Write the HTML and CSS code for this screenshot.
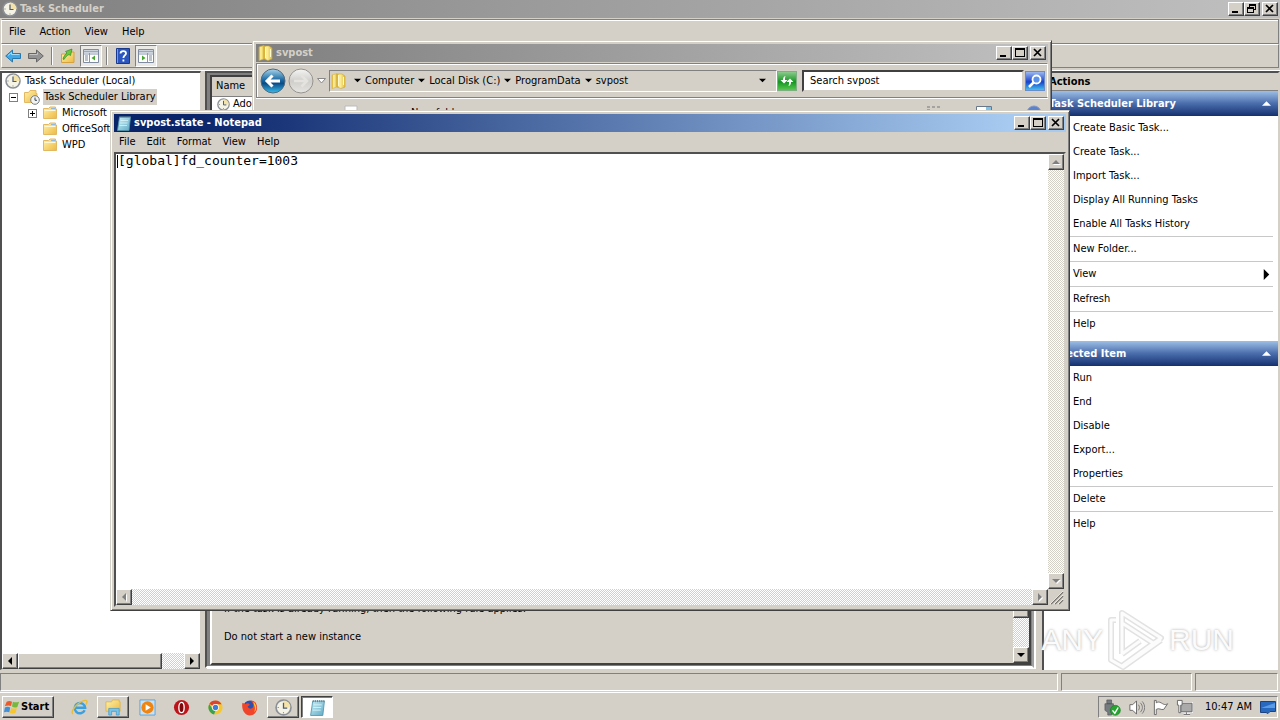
FILE: index.html
```html
<!DOCTYPE html>
<html lang="en">
<head>
<meta charset="utf-8">
<title>Task Scheduler</title>
<link rel="stylesheet" href="styles.css">
</head>
<body>
<svg class="defs" aria-hidden="true">
  <defs>
    <linearGradient id="gFolder" x1="0" y1="0" x2="1" y2="1"><stop offset="0" stop-color="#fff3ae"/><stop offset="1" stop-color="#edb93f"/></linearGradient>
    <linearGradient id="gOpen" x1="0" x2="1"><stop offset="0" stop-color="#d8ae28"/><stop offset=".35" stop-color="#fff3a0"/><stop offset="1" stop-color="#e0bb3e"/></linearGradient>
    <linearGradient id="gBlue" x1="0" y1="0" x2="0" y2="1"><stop offset="0" stop-color="#a9d4ea"/><stop offset=".45" stop-color="#1d6ba4"/><stop offset=".6" stop-color="#0b4b86"/><stop offset="1" stop-color="#35c0ee"/></linearGradient>
    <linearGradient id="gGrey" x1="0" y1="0" x2="0" y2="1"><stop offset="0" stop-color="#f5f5f3"/><stop offset=".5" stop-color="#cfcecb"/><stop offset="1" stop-color="#e6e5e2"/></linearGradient>
    <linearGradient id="gPad" x1="0" y1="0" x2="1" y2="1"><stop offset="0" stop-color="#c9eff7"/><stop offset="1" stop-color="#5fabc5"/></linearGradient>
  </defs>
  <symbol id="i-clock" viewBox="0 0 16 16"><circle cx="8" cy="8" r="7" fill="#f4f3e6" stroke="#8b9097" stroke-width="1.6"/><path d="M8 8V1.5A6.500 6.500 0 0 1 14.500 8Z" fill="#f4e3a8"/><path d="M8 3.500V8.500H11.500" fill="none" stroke="#4a5c74" stroke-width="1.2"/><path d="M8 13.500v-1M2.500 8h1" stroke="#777"/></symbol>
  <symbol id="i-folder" viewBox="0 0 16 16"><path d="M1.500 3.500h5l1.500-1.500h5.500v2H14.500v9.500h-13z" fill="url(#gFolder)" stroke="#e3b862"/><path d="M9 3.500h4" stroke="#8fb9e2"/><path d="M2.500 5.500h11" stroke="#fff8d2"/></symbol>
  <symbol id="i-libfolder" viewBox="0 0 16 16"><path d="M.5 3.500h4l1.500-2h6v3h1v9h-12.500z" fill="url(#gFolder)" stroke="#e3b862"/><circle cx="11" cy="11" r="4.300" fill="#f4f4ee" stroke="#747b84"/><path d="M11 8.500V11.300H13" fill="none" stroke="#34475f"/></symbol>
  <symbol id="i-open" viewBox="0 0 16 16"><path d="M1 2l5-1.500V14l-5 1.500z" fill="url(#gOpen)" stroke="#d8b23f" stroke-width=".6"/><path d="M6 1h5l3 2v11l-4 1.500L6 14z" fill="url(#gOpen)" stroke="#c9a436" stroke-width=".6"/><path d="M7.500 2v11M12.500 4v8" stroke="#fff9cd"/></symbol>
  <symbol id="i-pad" viewBox="0 0 16 16"><path d="M3.500 2h11l-1.500 13.500H1.500z" fill="url(#gPad)" stroke="#5293aa" stroke-width=".8"/><path d="M4 1v2M6 1v2M8 1v2M10 1v2M12 1v2M14 1v2" stroke="#5e7880" stroke-width=".8"/><path d="M4.500 5.500h7.500M4 8h7.500M3.500 10.500h7.500" stroke="#e4f8fc" stroke-width=".7"/></symbol>
  <symbol id="i-left" viewBox="0 0 16 16"><path d="M.7 8 7.500 2v3.500h8v5h-8V14z" fill="#42a9e8" stroke="#2978ab"/><path d="M3 7.500 6.500 4.500v2h8" fill="none" stroke="#a4dcfa"/></symbol>
  <symbol id="i-right" viewBox="0 0 16 16"><path d="M15.300 8 8.500 2v3.500h-8v5h8V14z" fill="#949494" stroke="#666"/><path d="M1.500 6.500h8v-2" fill="none" stroke="#c4c4c4"/></symbol>
  <symbol id="i-up" viewBox="0 0 16 16"><path d="M1.500 6h6l1-2h5.500v10.500H1.500z" fill="url(#gFolder)" stroke="#d5a23e"/><path d="M3 11C4 8 5 6.500 7 5L5.500 3.500 12 1l-1.500 6.500L9 6.500C7 7.500 5.500 9 4 11.500z" fill="#69c93c" stroke="#36861e" stroke-width=".7"/></symbol>
  <symbol id="i-paneL" viewBox="0 0 16 14"><path d="M.5.5h15v13H.5z" fill="#fff" stroke="#7e8ba1"/><path d="M1 2.500h14" stroke="#9aa8bb" stroke-width="2"/><path d="M6.500 4v9.500M1 5h14" stroke="#8998ad"/><path d="M2 7h3M2 9h3M2 11h3" stroke="#7b8796"/><path d="M12 6.500v5L8.500 9z" fill="#46a72d"/></symbol>
  <symbol id="i-paneR" viewBox="0 0 16 14"><path d="M.5.5h15v13H.5z" fill="#fff" stroke="#7e8ba1"/><path d="M1 2.500h14" stroke="#9aa8bb" stroke-width="2"/><path d="M9.500 4v9.500M1 5h14" stroke="#8998ad"/><path d="M11 7h3M11 9h3M11 11h3" stroke="#7b8796"/><path d="M4 6.500v5L7.500 9z" fill="#46a72d"/></symbol>
  <symbol id="i-help" viewBox="0 0 14 16"><path d="M.5.5h13v15H.5z" fill="#2c56bd" stroke="#193a8c"/><path d="M1.500 1v14" stroke="#779ae4"/><path d="M4.500 5.500C4.500 2.200 10 2.300 10 5.400 10 7.400 7.400 7.500 7.400 10M7.400 11.500v2" fill="none" stroke="#fff" stroke-width="1.800"/></symbol>
  <symbol id="i-min" viewBox="0 0 10 10"><path d="M1 7h6v2H1z"/></symbol>
  <symbol id="i-max" viewBox="0 0 10 10"><path d="M0 0h10v9H0zM1 2v6h8V2z" fill-rule="evenodd"/></symbol>
  <symbol id="i-restore" viewBox="0 0 10 10"><path d="M2 0h7v6H7V5h1V2H3v1H2zM0 3h7v6H0zM1 5v3h5V5z" fill-rule="evenodd"/></symbol>
  <symbol id="i-close" viewBox="0 0 10 10"><path d="M1 1l7 7M8 1 1 8" stroke="#000" stroke-width="1.700"/></symbol>
  <symbol id="t-l" viewBox="0 0 8 8"><path d="M6 0v8L2 4z"/></symbol>
  <symbol id="t-r" viewBox="0 0 8 8"><path d="M2 0v8l4-4z"/></symbol>
  <symbol id="t-u" viewBox="0 0 8 8"><path d="M0 6h8L4 2z"/></symbol>
  <symbol id="t-d" viewBox="0 0 8 8"><path d="M0 2h8L4 6z"/></symbol>
</svg>

<div class="desktop">
  <section class="scheduler" aria-label="Task Scheduler">
    <header class="titlebar inactive">
      <svg class="ic16"><use href="#i-clock"/></svg><h1>Task Scheduler</h1>
      <div class="winbtns"><button aria-label="Minimize"><svg><use href="#i-min"/></svg></button><button aria-label="Restore"><svg><use href="#i-restore"/></svg></button><button class="close" aria-label="Close"><svg><use href="#i-close"/></svg></button></div>
    </header>
    <nav class="menubar main-menu"><button>File</button><button>Action</button><button>View</button><button>Help</button></nav>
    <div class="toolbar">
      <button aria-label="Back"><svg class="ic16"><use href="#i-left"/></svg></button>
      <button aria-label="Forward"><svg class="ic16"><use href="#i-right"/></svg></button>
      <i class="vsep"></i>
      <button aria-label="Up"><svg class="ic16"><use href="#i-up"/></svg></button>
      <button class="on" aria-label="Console tree"><svg class="ic16"><use href="#i-paneL"/></svg></button>
      <i class="vsep"></i>
      <button aria-label="Help topics"><svg class="ic16"><use href="#i-help"/></svg></button>
      <button class="on" aria-label="Action pane"><svg class="ic16"><use href="#i-paneR"/></svg></button>
    </div>
    <div class="panes">
      <aside class="tree">
        <ul>
          <li><svg class="ic16"><use href="#i-clock"/></svg><span>Task Scheduler (Local)</span></li>
          <li class="l1"><button class="exp" aria-label="Collapse"></button><svg class="ic16"><use href="#i-libfolder"/></svg><span class="sel">Task Scheduler Library</span></li>
          <li class="l2"><button class="exp plus" aria-label="Expand"></button><svg class="ic16"><use href="#i-folder"/></svg><span>Microsoft</span></li>
          <li class="l3"><svg class="ic16"><use href="#i-folder"/></svg><span>OfficeSoftwar</span></li>
          <li class="l3"><svg class="ic16"><use href="#i-folder"/></svg><span>WPD</span></li>
        </ul>
        <div class="hscroll"><button class="sb" aria-label="Scroll left"><svg><use href="#t-l"/></svg></button><div class="thumb"></div><button class="sb end" aria-label="Scroll right"><svg><use href="#t-r"/></svg></button></div>
      </aside>
      <main class="center">
        <table class="tasks"><thead><tr><th>Name</th></tr></thead><tbody><tr><td><svg class="ic12"><use href="#i-clock"/></svg>Adobe</td></tr></tbody></table>
        <div class="detail">
          <div class="rules"><p>If the task is already running, then the following rule applies:</p><p>Do not start a new instance</p></div>
          <div class="vscroll"><div class="vthumb"></div><button class="sb" aria-label="Scroll down"><svg><use href="#t-d"/></svg></button></div>
        </div>
      </main>
      <aside class="actions">
        <h2>Actions</h2>
        <h3>Task Scheduler Library<svg><use href="#t-u"/></svg></h3>
        <button>Create Basic Task...</button><button>Create Task...</button><button>Import Task...</button><button>Display All Running Tasks</button><button>Enable All Tasks History</button>
        <hr><button>New Folder...</button>
        <hr><button>View<svg><use href="#t-r"/></svg></button>
        <hr><button>Refresh</button>
        <hr><button>Help</button>
        <h3 class="second">Selected Item<svg><use href="#t-u"/></svg></h3>
        <button>Run</button><button>End</button><button>Disable</button><button>Export...</button><button>Properties</button>
        <hr><button>Delete</button>
        <hr><button>Help</button>
      </aside>
    </div>
    <footer class="status"><div></div><div></div><div></div></footer>
  </section>

  <section class="window explorer" aria-label="svpost">
    <header class="titlebar inactive">
      <svg class="ic16"><use href="#i-open"/></svg><h1>svpost</h1>
      <div class="winbtns"><button aria-label="Minimize"><svg><use href="#i-min"/></svg></button><button aria-label="Maximize"><svg><use href="#i-max"/></svg></button><button class="close" aria-label="Close"><svg><use href="#i-close"/></svg></button></div>
    </header>
    <div class="navbar">
      <button class="round" aria-label="Back"><svg viewBox="0 0 26 26"><circle cx="13" cy="13" r="12" fill="url(#gBlue)" stroke="#51687d"/><path d="M20 13H8M12.500 7.500 7 13l5.500 5.500" fill="none" stroke="#fff" stroke-width="3"/></svg></button>
      <button class="round" aria-label="Forward"><svg viewBox="0 0 26 26"><circle cx="13" cy="13" r="12" fill="url(#gGrey)" stroke="#96948f"/><path d="M6 13h12M13.500 7.500 19 13l-5.500 5.500" fill="none" stroke="#e4e3df" stroke-width="2.500"/></svg></button>
      <button class="recent" aria-label="Recent pages"><svg viewBox="0 0 9 6"><path d="M.5.500h8l-4 4.500z" fill="#fff" stroke="#888"/></svg></button>
      <div class="address">
        <svg class="ic16"><use href="#i-open"/></svg>
        <svg class="tri"><use href="#t-d"/></svg><a href="#c">Computer</a>
        <svg class="tri"><use href="#t-d"/></svg><a href="#d">Local Disk (C:)</a>
        <svg class="tri"><use href="#t-d"/></svg><a href="#p">ProgramData</a>
        <svg class="tri"><use href="#t-d"/></svg><a href="#s">svpost</a>
        <button class="drop" aria-label="Previous locations"><svg class="tri"><use href="#t-d"/></svg></button>
      </div>
      <button class="refresh" aria-label="Refresh"><svg viewBox="0 0 16 16"><path d="M6.500 3C4.500 3.500 4 5 4 7H1.500L5 10.500 8.500 7H6V5zM9.500 13C11.500 12.500 12 11 12 9h2.500L11 5.500 7.500 9H10v2z" fill="#fff"/></svg></button>
      <input class="search" type="text" aria-label="Search svpost" value="Search svpost">
      <button class="go" aria-label="Search"><svg viewBox="0 0 16 16"><circle cx="9.500" cy="6.500" r="4" fill="#5a93ea" stroke="#fff" stroke-width="1.800"/><path d="M6.500 9.500 2 14" stroke="#fff" stroke-width="2.500"/></svg></button>
    </div>
    <div class="cmdbar">
      <svg class="ic-cmd" viewBox="0 0 16 16"><path d="M2 1h12v14H2z" fill="#fff" stroke="#bbb"/></svg><span>New folder</span>
      <svg class="ic-cmd push" viewBox="0 0 16 16"><path d="M1 2h3M6 2h3M11 2h3M1 5h3" stroke="#777"/></svg>
      <svg class="ic-cmd" viewBox="0 0 16 16"><path d="M.5 1.500h15v13H.5z" fill="#fff" stroke="#68788c"/><path d="M10 2h5v12h-5z" fill="#7fc4e8"/></svg>
      <svg class="ic-cmd" viewBox="0 0 16 16"><circle cx="8" cy="8" r="7" fill="#5a83cf" stroke="#8296c4"/></svg>
    </div>
  </section>

  <section class="window notepad" aria-label="svpost.state - Notepad">
    <header class="titlebar active">
      <svg class="ic16"><use href="#i-pad"/></svg><h1>svpost.state - Notepad</h1>
      <div class="winbtns"><button aria-label="Minimize"><svg><use href="#i-min"/></svg></button><button aria-label="Maximize"><svg><use href="#i-max"/></svg></button><button class="close" aria-label="Close"><svg><use href="#i-close"/></svg></button></div>
    </header>
    <nav class="menubar note-menu"><button>File</button><button>Edit</button><button>Format</button><button>View</button><button>Help</button></nav>
    <div class="editor">
      <div class="paper"><textarea aria-label="Document" spellcheck="false">[global]fd_counter=1003</textarea><i class="caret"></i></div>
      <div class="vscroll off"><button class="sb" aria-label="Scroll up"><svg><use href="#t-u"/></svg></button><button class="sb end" aria-label="Scroll down"><svg><use href="#t-d"/></svg></button></div>
      <div class="hscroll off"><button class="sb" aria-label="Scroll left"><svg><use href="#t-l"/></svg></button><button class="sb end" aria-label="Scroll right"><svg><use href="#t-r"/></svg></button></div>
      <svg class="grip" viewBox="0 0 16 16"><path d="M3 15 15 3M7 15l8-8M11 15l4-4" stroke="#77746f" stroke-width="1.500"/><path d="M2 15 15 2M6 15l9-9M10 15l5-5" stroke="#fff" stroke-width=".7"/></svg>
    </div>
  </section>

  <div class="watermark"><span>ANY</span>
    <svg viewBox="0 0 60 64"><g fill="none" stroke-linejoin="round"><path d="M16 46V5L55 30 16 58M16 15 47 35M10 12H5v40l12 7 38-27M16 46 34 33" stroke="#e2e2e2" stroke-width="6"/><path d="M16 46V5L55 30 16 58M16 15 47 35M10 12H5v40l12 7 38-27M16 46 34 33" stroke="#fcfcfc" stroke-width="3"/></g></svg>
    <span>RUN</span></div>

  <footer class="taskbar">
    <button class="start"><svg viewBox="0 0 18 16"><path d="M3 2c2-1 4-1 6 0L8 7C6 6 4 6 1 7z" fill="#eb5a2d"/><path d="M10 2c2 1 4 1 7 0l-2 6c-2 1-4 1-6-.5z" fill="#76b83c"/><path d="M1 8.500c2-1 4-1 6 0L6 14c-2-1-4-1-6 0z" fill="#3f8fd9"/><path d="M8 9c2 1 4 1 6.500 0L13 14.500c-2 1-4 1-6.500 0z" fill="#f7c52e"/></svg>Start</button>
    <button class="app" aria-label="Internet Explorer"><svg viewBox="0 0 18 18"><path d="M14.500 12A5.500 5.500 0 1 1 15 9.300H5" fill="none" stroke="#3ba0e0" stroke-width="2.600"/><path d="M2 16C-1 13 7 3 15 1.500c3-.3 2 3 .5 4.500" fill="none" stroke="#e9bd35" stroke-width="1.400"/></svg></button>
    <button class="app up" aria-label="Explorer"><svg viewBox="0 0 18 18"><path d="M1 3h6l1-2h7v2h1v10H1z" fill="url(#gFolder)" stroke="#dbb75a"/><path d="M4 17v-7h11v7h-3v-4H7v4z" fill="#79c4ea" stroke="#4799c8" stroke-width=".8"/></svg></button>
    <button class="app" aria-label="Media Player"><svg viewBox="0 0 18 18"><path d="M1 1h16v16H1z" fill="#c8e2f5" stroke="#62a0cf"/><circle cx="9" cy="9" r="6.500" fill="#f08410"/><path d="M7 5.500v7l5.500-3.500z" fill="#fff"/></svg></button>
    <button class="app" aria-label="Opera"><svg viewBox="0 0 18 18"><circle cx="9" cy="9" r="8" fill="#bd141a"/><ellipse cx="9" cy="9" rx="2.800" ry="5.500" fill="#7c090d" stroke="#fff" stroke-width="1.400"/></svg></button>
    <button class="app" aria-label="Chrome"><svg viewBox="0 0 18 18"><circle cx="9" cy="9" r="7.500" fill="#f4c72c"/><path d="M9 9 2.500 5A7.500 7.500 0 0 1 15.500 5.500H9z" fill="#dc4333"/><path d="M2.500 5.200 6 11l3 1-1.500 4.300A7.500 7.500 0 0 1 2.500 5.200z" fill="#37a253"/><circle cx="9" cy="9" r="3.600" fill="#fff"/><circle cx="9" cy="9" r="2.800" fill="#3e7de0"/></svg></button>
    <button class="app" aria-label="Firefox"><svg viewBox="0 0 18 18"><circle cx="9.500" cy="8.500" r="7" fill="#2e4fb0"/><path d="M1.500 4 5 5.500c1-1.500 3-1 4.500.5L7 8c1 3 5 3 6 0 .5-3-1-5-3-6.500 5 0 7 4 7 8 0 5-4 8-8 8s-9-5-7.500-13.500z" fill="#f0452a"/><path d="M13 3c4 3 4 8 1 11 1-3 1-5 0-7z" fill="#ffc52c"/></svg></button>
    <button class="app up" aria-label="Task Scheduler"><svg><use href="#i-clock"/></svg></button>
    <button class="app down" aria-label="Notepad"><svg><use href="#i-pad"/></svg></button>
    <div class="tray">
      <svg viewBox="0 0 18 18"><path d="M3 1h5v4H3zM1 5h9v7l-2 2v3H4v-3l-3-2z" fill="#767b80" stroke="#555" stroke-width=".7"/><circle cx="12" cy="12" r="5.300" fill="#25a52f" stroke="#15751d" stroke-width=".6"/><path d="M9 12l2.500 3 3.500-6" fill="none" stroke="#fff" stroke-width="1.500"/></svg>
      <svg viewBox="0 0 18 18"><path d="M2 6h3l4-4v14l-4-4H2z" fill="#fff" stroke="#666"/><path d="M11 6c1.500 2 1.500 4 0 6M13 4c3 3 3 7 0 10M15 2.500c3.500 4 3.500 9 0 13" fill="none" stroke="#777"/></svg>
      <svg viewBox="0 0 18 18"><path d="M2.500 1.500v15h2V11c3-2 5 1 8 0l4-6c-3 2-5 0-7-1s-3-1-5 0V1.500z" fill="#fff" stroke="#666"/></svg>
      <svg viewBox="0 0 18 18"><path d="M5 4.500h12v9H5zM8 16.500h7M11 14v2" fill="#9a9a97" stroke="#fff" stroke-width="2.200"/><path d="M5 4.500h12v9H5zM8 16.500h7M11 14v2" fill="#aaa" stroke="#666"/><path d="M1.500 1.500h5v5H5v8h-2v-8H1.500z" fill="#fff" stroke="#666"/></svg>
      <time>10:47 AM</time>
      <svg class="show" viewBox="0 0 16 13"><path d="M.5.500h15v10H10l-2 2-2-1H.5z" fill="#2869c0" stroke="#1c4380"/><path d="M1 7 15 2v5z" fill="#5a9be5"/></svg>
    </div>
  </footer>
</div>
</body>
</html>
```

FILE: styles.css
```css
* { box-sizing: border-box; }
html, body { height: 100%; }
body {
  margin: 0;
  overflow: hidden;
  background: #d4d0c8;
  color: #000;
  font: 11px/14px "DejaVu Sans Condensed", "Open Sans", sans-serif;
}
button { font: inherit; color: inherit; background: none; border: 0; padding: 0; margin: 0; text-align: left; }
h1, h2, h3, p, ul { margin: 0; padding: 0; font-size: 11px; }
ul { list-style: none; }
svg { display: block; flex: none; }
.defs { position: absolute; width: 0; height: 0; }
.ic16 { width: 16px; height: 16px; }
.ic12 { width: 13px; height: 13px; }

.desktop { position: relative; display: flex; flex-direction: column; height: 100vh; overflow: hidden; }

/* Shared window parts */
.titlebar { display: flex; align-items: center; gap: 2px; height: 18px; padding: 0 2px; color: #fff; flex: none; }
.titlebar h1 { flex: 1; }
.titlebar.inactive { background: linear-gradient(90deg, #808080, #c0c0c0); color: #d4d0c8; }
.titlebar.active { background: linear-gradient(90deg, #0a246a 8%, #a6caf0 94%); }
.winbtns { display: flex; }
.winbtns button, .sb, .thumb, .vthumb, .start, .app.up {
  background: #d4d0c8;
  border: 1px solid;
  border-color: #fff #404040 #404040 #fff;
  box-shadow: inset -1px -1px #808080;
}
.winbtns button { width: 16px; height: 14px; padding: 1px 2px; color: #000; }
.winbtns .close { margin-left: 2px; }
.winbtns svg { width: 10px; height: 10px; }
.menubar { display: flex; align-items: center; flex: none; }

.sb { display: flex; align-items: center; justify-content: center; width: 16px; height: 16px; flex: none; }
.sb svg { width: 8px; height: 8px; }
.off .sb svg { fill: #808080; filter: drop-shadow(1px 1px #fff); }
.hscroll, .vscroll { display: flex; background: repeating-conic-gradient(#fff 0 25%, #d4d0c8 0 50%) 0 0 / 2px 2px; }
.vscroll { flex-direction: column; }
.end { margin-left: auto; }
.vscroll .end { margin: auto 0 0; }

/* Task Scheduler */
.scheduler { flex: 1; min-height: 0; display: flex; flex-direction: column; }
.main-menu { height: 25px; gap: 14px; padding: 0 7px; margin: 1px 1px 0; border: 1px solid; border-color: #808080 #808080 #808080 #fff; box-shadow: inset 0 1px #fff; }
.toolbar { display: flex; align-items: center; height: 24px; gap: 1px; margin: 0 1px; border: 1px solid; border-color: #fff #808080 #808080 #fff; flex: none; }
.toolbar button { width: 22px; height: 22px; padding: 3px; }
.toolbar .on { border: 1px solid; border-color: #808080 #fff #fff #808080; padding: 2px; background: #ebe9e5; }
.vsep { width: 2px; height: 18px; margin: 0 3px; border-left: 1px solid #808080; border-right: 1px solid #fff; }
.panes { flex: 1; min-height: 0; display: flex; margin-top: 2px; border-top: 1px solid #fff; }
.tree { width: 201px; display: flex; flex-direction: column; background: #fff; border: solid; border-width: 2px 1px 1px 2px; border-color: #505050 #d4d0c8 #d4d0c8 #505050; flex: none; }
.tree ul { flex: 1; overflow: hidden; }
.tree li { display: flex; align-items: center; height: 16px; padding-left: 3px; gap: 3px; white-space: nowrap; }
.tree li span { padding: 0 1px; }
.tree .l1 { padding-left: 7px; }
.tree .l1 .ic16 { margin-left: 3px; }
.tree .l2 { padding-left: 26px; }
.tree .l2 .ic16 { margin-left: 2px; }
.tree .l3 { padding-left: 40px; }
.tree .sel { background: #d4d0c8; height: 16px; line-height: 16px; }
.exp { width: 9px; height: 9px; border: 1px solid #808080; background: linear-gradient(#000, #000) center / 5px 1px no-repeat #fff; }
.exp.plus { background: linear-gradient(#000, #000) center / 5px 1px no-repeat, linear-gradient(#000, #000) center / 1px 5px no-repeat #fff; }
.tree .hscroll { height: 16px; }
.thumb { width: 144px; height: 16px; }

.center { flex: 1; min-width: 0; display: flex; flex-direction: column; margin: 0 6px 2px 4px; padding: 2px 1px 1px 3px; background: #808080; border: 2px solid; border-color: #505050 #a0a0a0 #fff #505050; box-shadow: 2px 1px #fff; }
.tasks { width: 100%; border-collapse: collapse; background: #fff; border: solid #404040; border-width: 2px 0 0 2px; }
.tasks th { height: 20px; padding: 0 4px; text-align: left; font-weight: normal; background: #d4d0c8; border-bottom: 1px solid #808080; }
.tasks td { height: 16px; padding: 0 5px; white-space: nowrap; }
.tasks td svg { display: inline-block; vertical-align: middle; margin-right: 3px; }
.detail { flex: 1; min-height: 0; display: flex; background: #d4d0c8; border: 2px solid; border-color: #808080 #404040 #404040 #fff; }
.rules { flex: 1; display: flex; flex-direction: column; justify-content: flex-end; gap: 14px; padding: 0 12px 19px; }
.detail .vscroll { width: 16px; justify-content: flex-end; }
.vthumb { height: 460px; margin-bottom: 29px; }

.actions { width: 238px; flex: none; background: #fff; border: solid; border-width: 2px 2px 0 2px; border-color: #505050 #d4d0c8 #fff #505050; display: flex; flex-direction: column; margin-left: 2px; }
.actions h2 { height: 18px; padding: 2px 5px; background: #d4d0c8; border-bottom: 1px solid #808080; }
.actions h3 { display: flex; align-items: center; justify-content: space-between; height: 25px; padding: 0 7px 0 5px; color: #fff; background: linear-gradient(#9dbfe6, #4a6dac 50%, #16306f); }
.actions h3 svg { width: 9px; height: 9px; fill: #fff; }
.actions .second { margin-top: 5px; }
.actions button { display: flex; align-items: center; justify-content: space-between; height: 24px; padding: 0 6px 0 29px; }
.actions button svg { width: 11px; height: 11px; }
.actions hr { width: auto; height: 1px; border: 0; margin: 0 5px 0 0; background: #c8c8c8; }

.status { display: flex; gap: 3px; height: 23px; padding: 3px 2px 1px 0; border-bottom: 1px solid #fff; flex: none; }
.status div { border: 1px solid; border-color: #808080 #fff #fff #808080; }
.status div:nth-child(1) { flex: 1; }
.status div:nth-child(2) { width: 131px; }
.status div:nth-child(3) { width: 83px; }

/* Floating windows */
.window { position: absolute; display: flex; flex-direction: column; background: #d4d0c8; border: 1px solid; border-color: #d4d0c8 #404040 #404040 #d4d0c8; box-shadow: inset 1px 1px #fff, inset -1px -1px #808080; padding: 3px; }
.explorer { left: 252px; right: 228px; top: 40px; height: 200px; }
.notepad { left: 110px; right: 210px; top: 110px; bottom: 109px; }

.navbar { display: flex; align-items: center; height: 35px; margin-top: 1px; padding: 0 2px 0 3px; border: 1px solid; border-color: #808080 #fff #808080 #808080; box-shadow: inset 1px 1px #fff, 0 1px #fff; flex: none; }
.round { width: 26px; height: 26px; margin-right: 2px; border-radius: 13px; }
.round svg { width: 26px; height: 26px; }
.recent { padding: 0 2px; margin-left: -1px; }
.recent svg { width: 9px; height: 6px; }
.address { display: flex; align-items: center; flex: 1; min-width: 0; height: 22px; margin-left: 1px; padding-left: 1px; border: 1px solid; border-color: #808080 #fff #fff #808080; white-space: nowrap; }
.address a { color: #000; text-decoration: none; margin: 0 4px; }
.tri { width: 7px; height: 7px; }
.address .ic16 { margin-right: 7px; }
.drop { margin-left: auto; padding: 5px 10px; }
.refresh, .go { width: 20px; height: 20px; padding: 1px; border: 1px solid #7fae83; background: linear-gradient(#8acb8c, #169522 55%, #56c84e); }
.refresh svg, .go svg { width: 16px; height: 16px; }
.search { width: 222px; height: 22px; margin: 0 1px 0 5px; padding: 0 6px; font: inherit; background: #fff; border: 2px solid; border-color: #404040 #d4d0c8 #d4d0c8 #404040; border-radius: 0; }
.go { border-color: #6c8cc8; background: linear-gradient(#9bb8f0, #1741cb 55%, #44c2ed); }
.cmdbar { display: flex; align-items: center; gap: 40px; height: 30px; padding: 0 12px 0 87px; }
.cmdbar span { padding-left: 18px; }
.ic-cmd { width: 16px; height: 16px; margin-right: -6px; }
.push { margin-left: auto; }

.note-menu { height: 20px; padding: 0 5px; gap: 11px; }
.editor { flex: 1; min-height: 0; display: grid; grid-template-columns: 1fr 16px; grid-template-rows: 1fr 16px; border: 2px solid; border-color: #505050 #d4d0c8 #d4d0c8 #505050; }
.paper { position: relative; display: flex; background: #fff; }
textarea { flex: 1; resize: none; border: 0; outline: 0; margin: 0; padding: 0 2px; overflow: hidden; background: #fff; color: #000; font: 13px/14px "DejaVu Sans Mono", monospace; }
.caret { position: absolute; left: 1px; top: 1px; width: 1px; height: 13px; background: #000; }
.grip { width: 16px; height: 16px; }

.watermark { position: absolute; right: 46px; bottom: 48px; display: flex; align-items: center; gap: 3px; pointer-events: none; color: #fbfbfb; font: 30px/64px "Liberation Sans", sans-serif; text-shadow: 0 0 3px #aaa; }
.watermark svg { width: 60px; height: 64px; }

/* Taskbar */
.taskbar { display: flex; align-items: center; height: 27px; padding: 1px 2px 0; gap: 2px; flex: none; }
.start { display: flex; align-items: center; gap: 1px; width: 52px; height: 22px; padding: 0 1px; margin-right: 7px; font-weight: bold; }
.start svg { width: 16px; height: 16px; }
.app { display: flex; align-items: center; justify-content: center; width: 32px; height: 22px; }
.app svg { width: 17px; height: 17px; }
.app.down { background: #fff; border: 1px solid; border-color: #404040 #fff #fff #404040; box-shadow: inset 1px 1px #808080; }
.tray { display: flex; align-items: center; gap: 7px; height: 22px; margin-left: auto; padding: 0 1px 0 5px; border: 1px solid; border-color: #808080 #fff #fff #808080; }
.tray svg { width: 17px; height: 17px; }
.tray time { margin: 0 1px 0 5px; white-space: nowrap; }
.tray .show { width: 16px; height: 13px; }
```
